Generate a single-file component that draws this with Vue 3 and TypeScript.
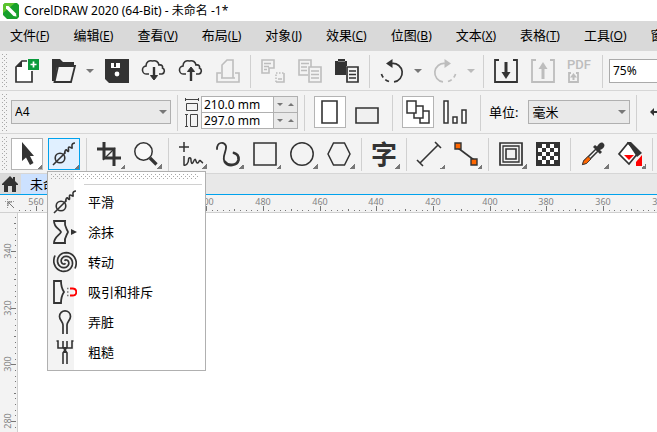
<script setup lang="ts">
import { computed, onBeforeUnmount, onMounted, ref } from 'vue'

interface Item {
  kind: 'tool' | 'caret' | 'sep'
  icon?: string
  label?: string
  off?: boolean
  corner?: boolean
  state?: 'framed' | 'active'
}

const D = '#333'
const G = '#bdbdbd'
const BG = '#f3f3f3'

/* One arm of the twirl icon: a spiral of one and a half turns. */
function spiral(phase: number) {
  const pts: string[] = []
  for (let t = 0.6; t <= Math.PI * 3; t += 0.2) {
    const r = 0.6 + t * 1.2
    pts.push(`${(12 + r * Math.cos(t + phase)).toFixed(1)} ${(12 + r * Math.sin(t + phase)).toFixed(1)}`)
  }
  return `<path d="M${pts.join('L')}" fill="none" stroke="${D}" stroke-width="1.700" stroke-linejoin="round"/>`
}

const cloud = `<path d="M7 15H5A4 4 0 0 1 4 7C4 3 7 1 10.500 2C14 1 16.500 3 17 6C20 5.500 21 7 20.500 9A3.200 3.200 0 0 1 20 15H17" fill="none" stroke="${D}" stroke-width="1.600"/>`
const smooth = `<g fill="none" stroke="${D}" stroke-width="1.600"><path d="M1 23L13.500 10.500"/><circle cx="8" cy="16" r="4.800"/><path d="M12.500 11.500C13 8 14 7 15 8.500S17 10 16.500 7.500S17 4.500 18.500 5.500S20.500 7 20 4.500S21 1 23 1"/></g>`

const icons: Record<string, string> = {
  create: `<path d="M12 2H7L1 8V23H17V12" fill="#fff" stroke="${D}" stroke-width="1.700"/><path d="M1 8L7 2V8Z" fill="${D}"/><rect x="13" y="0" width="11" height="11" fill="#0a9a3c"/><path d="M18.500 2.500V8.500M15.500 5.500H21.500" stroke="#fff" stroke-width="1.700"/>`,
  open: `<path d="M0 0H8L11 3H22V8H5L3 22H0Z" fill="${D}"/><path d="M6 7H23L19 23H2.500Z" fill="${BG}" stroke="${D}" stroke-width="1.800"/>`,
  save: `<path d="M0 0H24V24H4L0 20Z" fill="${D}"/><path d="M6 4H15V9H6Z" fill="#fff"/><path d="M9 4H11V8H9Z" fill="${D}"/><circle cx="12" cy="15" r="2.400" fill="#fff"/>`,
  down: cloud + `<path d="M12 8V20" stroke="${D}" stroke-width="2.400"/><path d="M8.500 16.500L12 21L15.500 16.500Z" fill="${D}" stroke="${D}"/>`,
  up: cloud + `<path d="M12 10V22" stroke="${D}" stroke-width="2.400"/><path d="M8.500 12.500L12 8L15.500 12.500Z" fill="${D}" stroke="${D}"/>`,
  print: `<g fill="none" stroke="${G}" stroke-width="1.600"><path d="M5 14H1V23H23V14H19M6 19V6L11 1H17V19ZM5 19H19"/></g>`,
  cut: `<g fill="none" stroke="${G}" stroke-width="1.600"><path d="M1 1H13V9H8V14H1ZM3 4.500H10M3 7.500H8M3 10.500H6"/><path d="M15 23H23V14M17 20H21"/><path d="M15 23V14H23" stroke-dasharray="1.500 1.500"/></g>`,
  copy: `<g fill="none" stroke="${G}" stroke-width="1.600"><path d="M10 16H1V1H13V8M3 4.500H11M3 8H9M3 11.500H9"/><path d="M11 8H23V23H11ZM13 12H21M13 15.500H21M13 19H21"/></g>`,
  paste: `<path d="M0 2H3V0H10V2H12V7H11V16H0Z" fill="${D}"/><path d="M3 2.500H10" stroke="#888"/><path d="M12 8H23V23H12Z" fill="${BG}" stroke="${D}" stroke-width="1.700"/><path d="M14 12H21M14 15.500H21M14 19H21" stroke="${D}" stroke-width="1.500"/>`,
  undo: `<path d="M6 4.500L12.500 0V9Z" fill="${D}"/><path d="M12 4.500A9.200 9.200 0 0 1 14 22.800" fill="none" stroke="${D}" stroke-width="1.700"/><path d="M9 22.500Q2 20 1 13" fill="none" stroke="${D}" stroke-width="1.700" stroke-dasharray="4 3"/>`,
  redo: `<path d="M18 4.500L11.500 0V9Z" fill="${G}"/><path d="M12 4.500A9.200 9.200 0 0 0 10 22.800" fill="none" stroke="${G}" stroke-width="1.700"/><path d="M15 22.500Q22 20 23 13" fill="none" stroke="${G}" stroke-width="1.700" stroke-dasharray="4 3"/>`,
  importer: `<path d="M5 1H1V23H23V1H19" fill="none" stroke="${D}" stroke-width="1.800"/><path d="M12 3V15" stroke="${D}" stroke-width="3"/><path d="M7.500 13H16.500L12 20Z" fill="${D}"/>`,
  exporter: `<path d="M5 1H1V23H23V1H19" fill="none" stroke="${G}" stroke-width="1.800"/><path d="M12 8V20" stroke="${G}" stroke-width="3"/><path d="M7.500 10H16.500L12 3Z" fill="${G}"/>`,
  pdf: `<text x="-1" y="10" font-size="13" font-weight="500" fill="${G}" font-family="Roboto, sans-serif">PDF</text><path d="M3 14H1V23H10V14H8" fill="none" stroke="${G}" stroke-width="1.800"/><path d="M5.500 16V21" stroke="${G}" stroke-width="2"/><path d="M2 18.500H9L5.500 14Z" fill="${G}"/>`,
  pick: `<path d="M7 0V19L11 15.500L15 23L18.500 21L15 14H19Z" fill="${D}"/>`,
  smooth,
  crop: `<g fill="none" stroke="${D}" stroke-width="3"><path d="M7 0V16H24M0 7H17V24"/></g><path d="M6 18L18 6" stroke="${D}" stroke-width="1.200"/>`,
  zoom: `<circle cx="9.500" cy="9.500" r="8.700" fill="#f8f8f8" stroke="${D}" stroke-width="1.500"/><path d="M16 16L22.500 22.500" stroke="${D}" stroke-width="3.200"/>`,
  freehand: `<g fill="none" stroke="${D}" stroke-width="1.500"><path d="M5 0V10M0 5H10"/><path d="M5 14V23C7 24 9.500 21 9.500 18S12 15 12 18S13 23 14.500 19.500S16.500 17 17 19S19 22 20 19.500S22 20 24 21"/></g>`,
  curve: `<g fill="none" stroke="${D}" stroke-linecap="round"><path d="M1 7C1 0 8 -1 10 4C11 9 5 16 9 20" stroke-width="1.800"/><path d="M9 20C12 24.500 21 24 22.500 18C23 14 20.500 11.500 18 11" stroke-width="2.800"/></g>`,
  rect: `<path d="M1 1H23V23H1Z" fill="none" stroke="${D}" stroke-width="1.600"/>`,
  ellipse: `<circle cx="12" cy="12" r="11.200" fill="none" stroke="${D}" stroke-width="1.500"/>`,
  polygon: `<path d="M6.500 1H17.500L23 12L17.500 23H6.500L1 12Z" fill="none" stroke="${D}" stroke-width="1.500"/>`,
  text: `<text x="-1" y="22" font-size="26" font-weight="700" fill="${D}" font-family="'Noto Sans CJK SC', sans-serif">字</text>`,
  line: `<path d="M3 21L21 3M0 18L6 24M18 0L24 6" fill="none" stroke="${D}" stroke-width="1.600"/>`,
  connector: `<path d="M4 6L20 18" stroke="${D}" stroke-width="1.600"/><path d="M1 1H7V7H1ZM17 17H23V23H17Z" fill="#f60" stroke="${D}" stroke-width="1.400"/>`,
  contour: `<g fill="none" stroke="${D}"><path d="M1 1H23V23H1Z" stroke-width="1.700"/><path d="M4 4H20V20H4Z" stroke-width="1.300"/><path d="M7 7H17V17H7Z" stroke-width="1.600"/></g>`,
  checker: `<path d="M0 0H24V24H0Z" fill="${D}"/><path d="${[0, 1, 2, 3, 4].map(r => (r % 2 ? [0, 2, 4] : [1, 3]).map(c => `M${2 + c * 4} ${2 + r * 4}h4v4h-4z`).join('')).join('')}" fill="#fff"/>`,
  dropper: `<path d="M2 22L3 19L15 7L17 9L5 21Z" fill="#fff" stroke="${D}" stroke-width="1.500"/><path d="M1.500 22.500L2.500 19L7 14.500L10 17L5.500 21.500Z" fill="#f60" stroke="${D}" stroke-width=".8"/><path d="M12 5L14 3L16 4.500C19 -1 22 0 23 2C24.500 4 22 7 19 8L21 10L19 12Z" fill="${D}"/>`,
  fill: `<path d="M10 1L20 11L11 22L1 12Z" fill="#fff" stroke="${D}" stroke-width="1.700"/><path d="M9 0H13L24 11L19 15Z" fill="${D}"/><path d="M6 13H16L11 18Z" fill="#f00"/><path d="M24 13V24H18V20Z" fill="#f00"/>`,
  smear: `<path d="M1 1H12C11 7 14 9 15 12C14 15 11 17 12 23H1C1 17 7 15 8 12C7 9 1 8 1 1Z" fill="none" stroke="${D}" stroke-width="1.800"/><path d="M18 9L24 12L18 15Z" fill="${D}"/>`,
  twirl: spiral(0.6) + spiral(Math.PI + 0.6),
  attract: `<path d="M1 1H8C8 5 9 9 11 12C9 15 8 19 8 23H1Z" fill="none" stroke="${D}" stroke-width="1.800"/><path d="M14 8.500H15.500M14 15.500H15.500M14 12H15.500" stroke="#777" stroke-width="1.300"/><path d="M17 8.500H19.500C24.500 8.500 24.500 15.500 19.500 15.500H17" fill="none" stroke="#f00" stroke-width="1.800"/>`,
  smudge: `<path d="M10 24V15C10 12 6.500 10 6.500 6.500C6.500 -1 17.500 -1 17.500 6.500C17.500 10 14 12 14 15V24" fill="none" stroke="${D}" stroke-width="1.700"/>`,
  rough: `<g fill="none" stroke="${D}" stroke-width="1.600"><path d="M3.500 1H5V8H10V1M14 1V8H19V1H20.500M10 24V13M14 24V13"/></g><path d="M9 7H15L13 10L15 13H9L11 10Z" fill="${D}"/>`,
}

const tool = (icon: string, label: string, extra: Partial<Item> = {}): Item => ({ kind: 'tool', icon, label, ...extra })
const caret = (label: string, off = false): Item => ({ kind: 'caret', label, off })
const sep: Item = { kind: 'sep' }
const C = { corner: true }

const standard: Item[] = [
  tool('create', '新建'), tool('open', '打开'), caret('最近打开'), tool('save', '保存'),
  tool('down', '从云端打开'), tool('up', '保存到云端'), tool('print', '打印', { off: true }), sep,
  tool('cut', '剪切', { off: true }), tool('copy', '复制', { off: true }), tool('paste', '粘贴'), sep,
  tool('undo', '撤消'), caret('撤消列表'), tool('redo', '重做', { off: true }), caret('重做列表', true), sep,
  tool('importer', '导入'), tool('exporter', '导出', { off: true }), tool('pdf', '发布为 PDF', { off: true }), sep,
]

const toolbox: Item[] = [
  tool('pick', '选择', { corner: true, state: 'framed' }), tool('smooth', '平滑', { corner: true, state: 'active' }), sep,
  tool('crop', '裁剪', C), tool('zoom', '缩放', C), sep,
  tool('freehand', '手绘', C), tool('curve', '艺术笔', C), tool('rect', '矩形', C), tool('ellipse', '椭圆形', C), tool('polygon', '多边形', C), sep,
  tool('text', '文本', C), sep,
  tool('line', '平行度量', C), tool('connector', '连接器', C), sep,
  tool('contour', '轮廓图', C), tool('checker', '透明度'), sep,
  tool('dropper', '颜色滴管', C), tool('fill', '交互式填充', C), sep,
]

const menus: [string, string][] = [
  ['文件', 'F'], ['编辑', 'E'], ['查看', 'V'], ['布局', 'L'], ['对象', 'J'], ['效果', 'C'],
  ['位图', 'B'], ['文本', 'X'], ['表格', 'T'], ['工具', 'O'], ['窗口', 'W'],
]

const flyout: [string, string][] = [
  ['smooth', '平滑'], ['smear', '涂抹'], ['twirl', '转动'], ['attract', '吸引和排斥'], ['smudge', '弄脏'], ['rough', '粗糙'],
]

const zoomLevel = ref('75%')
const paper = ref('A4')
const unit = ref('毫米')
const sizes = ref([
  { label: '宽度', value: '210.0 mm' },
  { label: '高度', value: '297.0 mm' },
])

const view = ref({ w: window.innerWidth, h: window.innerHeight })
const measure = () => { view.value = { w: window.innerWidth, h: window.innerHeight } }
onMounted(() => window.addEventListener('resize', measure))
onBeforeUnmount(() => window.removeEventListener('resize', measure))

/* Ruler marks: one every 2 units, a taller one every 10, a labelled one every 20. */
const STEP = 5.67
const LABEL_REACH = 8
function marks(origin: number, first: number, length: number) {
  const out: { pos: number; len: number; label: string }[] = []
  for (let i = -Math.floor(origin / STEP); origin + i * STEP < length + LABEL_REACH; i++) {
    const major = i % 10 === 0
    out.push({
      pos: Math.round(origin + i * STEP),
      len: major ? 5 : i % 5 === 0 ? 2 : 1,
      label: major ? String(Math.abs(first - i * 2)) : '',
    })
  }
  return out
}
const across = computed(() => marks(19, 560, view.value.w - 17))
const along = computed(() => marks(38, 340, view.value.h - 213))
</script>

<template>
  <div class="app">
    <header class="title">
      <svg class="logo" viewBox="0 0 16 16" aria-hidden="true">
        <path d="M2 0H14L16 2V14L14 16H4L0 12V2Z" fill="#17a02b" />
        <path d="M0 10V2L2 0H12Z" fill="#5cc32e" />
        <path d="M3 3L5.500 3L13 10.500L13.500 13.500L10.500 13L3 5.500Z" fill="#fff" />
      </svg>
      <span>CorelDRAW 2020 (64-Bit) - 未命名 -1*</span>
    </header>

    <nav class="menubar">
      <button v-for="[name, key] in menus" :key="key" type="button">{{ name }}<small>(<u>{{ key }}</u>)</small></button>
    </nav>

    <div class="bar standard" role="toolbar" aria-label="标准">
      <i class="grip"></i>
      <template v-for="(it, i) in standard" :key="i">
        <i v-if="it.kind === 'sep'" class="sep"></i>
        <button v-else-if="it.kind === 'caret'" class="caret" :class="{ off: it.off }" type="button" :aria-label="it.label"></button>
        <button v-else class="tool" type="button" :aria-label="it.label" :disabled="it.off">
          <svg viewBox="0 0 24 24" v-html="icons[it.icon!]"></svg>
        </button>
      </template>
      <input v-model="zoomLevel" class="zoom" type="text" aria-label="缩放级别" />
    </div>

    <div class="bar property" role="toolbar" aria-label="属性栏">
      <i class="grip"></i>
      <div class="pick paper">
        <select v-model="paper" aria-label="页面大小"><option>A4</option><option>A3</option></select>
      </div>
      <i class="sep"></i>
      <div class="dims">
        <svg viewBox="0 0 14 32" aria-hidden="true">
          <g fill="none" stroke="#444">
            <path d="M1 3.500H13M.5 2V5M13.500 2V5M1.500 7.500H12.500V14.500H1.500Z" />
            <path d="M1.500 19V30M0 18.500H3M0 30.500H3M5.500 18.500H12.500V30.500H5.500Z" />
          </g>
        </svg>
        <div class="sizes">
          <div v-for="s in sizes" :key="s.label" class="size">
            <input v-model="s.value" type="text" :aria-label="s.label" />
            <button type="button" class="dn" :aria-label="'减小' + s.label"></button>
            <button type="button" class="up" :aria-label="'增大' + s.label"></button>
          </div>
        </div>
      </div>
      <i class="sep"></i>
      <div class="pair">
        <button class="choice on" type="button" aria-label="纵向">
          <svg viewBox="0 0 24 24"><path d="M4 1H19V23H4Z" fill="#fff" stroke="#333" stroke-width="1.600" /></svg>
        </button>
        <button class="choice" type="button" aria-label="横向">
          <svg viewBox="0 0 24 24"><path d="M1 8H23V23H1Z" fill="#f0f0f0" stroke="#333" stroke-width="1.600" /></svg>
        </button>
      </div>
      <i class="sep"></i>
      <div class="pair">
        <button class="choice on" type="button" aria-label="所有页面">
          <svg viewBox="0 0 24 24"><g fill="#fff" stroke="#333" stroke-width="1.500"><path d="M14 11H23V23H14Z" /><path d="M8 6H17V18H8Z" /><path d="M1 1H10V13H1Z" /></g></svg>
        </button>
        <button class="choice" type="button" aria-label="当前页">
          <svg viewBox="0 0 24 24"><path d="M1 1H5V23H1ZM10 17H14V23H10ZM19 10H23V23H19Z" fill="#fff" stroke="#333" stroke-width="1.500" /></svg>
        </button>
      </div>
      <i class="sep"></i>
      <label class="unit" for="unit">单位:</label>
      <div class="pick units">
        <select id="unit" v-model="unit"><option>毫米</option><option>厘米</option></select>
      </div>
      <i class="sep"></i>
      <button class="nudge" type="button" aria-label="微调距离">
        <svg viewBox="0 0 12 12"><path d="M0 6L4 2V10ZM12 6L8 2V10ZM3 5H9V7H3Z" fill="#333" /></svg>
      </button>
    </div>

    <div class="bar toolbox" role="toolbar" aria-label="工具箱">
      <i class="grip"></i>
      <template v-for="(it, i) in toolbox" :key="i">
        <i v-if="it.kind === 'sep'" class="sep"></i>
        <button v-else class="tool" :class="[it.state, { corner: it.corner }]" type="button" :aria-label="it.label">
          <svg viewBox="0 0 24 24" v-html="icons[it.icon!]"></svg>
        </button>
      </template>
      <div class="flyout" role="menu">
        <i class="dots"></i>
        <i class="rule"></i>
        <button v-for="[icon, name] in flyout" :key="icon" type="button" role="menuitem">
          <svg viewBox="0 0 24 24" v-html="icons[icon]"></svg>
          <span>{{ name }}</span>
        </button>
      </div>
    </div>

    <div class="tabs">
      <button class="home" type="button" aria-label="欢迎屏幕">
        <svg viewBox="0 0 16 16"><path d="M8 0L16 8V9H14V16H10V10H6V16H2V9H0V8ZM11 1H13V5L11 3Z" fill="#333" /></svg>
      </button>
      <button class="doc" type="button">未命名 -1*</button>
    </div>

    <div class="ruler-row">
      <button class="origin" type="button" aria-label="标尺原点">
        <svg viewBox="0 0 10 10"><path d="M2.500 0V10M0 2.500H10" stroke="#999" stroke-dasharray="1 1" /><path d="M3 3L9 9M3 7V3H7" fill="none" stroke="#777" /></svg>
      </button>
      <svg class="h-ruler">
        <template v-for="m in across" :key="m.pos">
          <rect :x="m.pos" :y="16 - m.len" width="1" :height="m.len" />
          <text v-if="m.label" :x="m.pos" y="10">{{ m.label }}</text>
        </template>
      </svg>
    </div>

    <div class="work">
      <svg class="v-ruler">
        <template v-for="m in along" :key="m.pos">
          <rect :x="16 - m.len" :y="m.pos" :width="m.len" height="1" />
          <text v-if="m.label" :transform="`translate(11 ${m.pos}) rotate(-90)`">{{ m.label }}</text>
        </template>
      </svg>
      <main class="canvas"></main>
    </div>
  </div>
</template>

<style>
body {
  background: #fff;
}
</style>

<style scoped>
.app {
  display: flex;
  flex-direction: column;
  height: 100vh;
  overflow: hidden;
  color: #000;
  font: 13px/20px "Noto Sans", "Noto Sans CJK SC", sans-serif;
}
.app * {
  box-sizing: border-box;
}
button,
input,
select {
  margin: 0;
  padding: 0;
  border: 0;
  background: none;
  color: inherit;
  font: inherit;
}
svg {
  display: block;
  flex: none;
}
.title {
  display: flex;
  flex: none;
  align-items: center;
  gap: 5px;
  height: 21px;
  padding-left: 3px;
  font-size: 12px;
  white-space: nowrap;
}
.logo {
  width: 16px;
  height: 16px;
}
.menubar {
  display: flex;
  flex: none;
  gap: 24px;
  height: 30px;
  padding: 0 0 2px 10px;
  background: #d9d9d9;
}
.menubar button {
  flex: none;
  white-space: nowrap;
}
.menubar small {
  font-size: 12px;
}
.bar {
  position: relative;
  display: flex;
  flex: none;
  align-items: center;
  background: #f3f3f3;
  border-bottom: 1px solid #d6d6d6;
}
.bar > * {
  flex: none;
}
.standard,
.toolbox {
  height: 40px;
}
.property {
  height: 43px;
}
.grip {
  align-self: stretch;
  width: 6px;
  margin: 3px 0 2px 2px;
}
.grip,
.dots {
  background:
    conic-gradient(at 1px 1px, transparent 75%, #a8a8a8 0) 0 0 / 4px 4px,
    conic-gradient(at 1px 1px, transparent 75%, #a8a8a8 0) 2px 2px / 4px 4px;
}
.sep {
  align-self: stretch;
  width: 1px;
  margin: 4px 3px 2px 4px;
  background: #d0d0d0;
}
.tool {
  position: relative;
  display: flex;
  align-items: center;
  justify-content: center;
  width: 37px;
  height: 32px;
  padding-left: 1px;
}
.tool svg {
  width: 24px;
  height: 24px;
  overflow: visible;
}
.framed,
.active {
  width: 32px;
  margin: 0 2px 0 3px;
  padding: 0;
  border: 1px solid #b4b4b4;
  background: #fff;
}
.active {
  border-color: #00a2ed;
  background: #e0f0ff;
}
.corner::after {
  content: "";
  position: absolute;
  right: 2px;
  bottom: 1px;
  width: 5px;
  height: 5px;
  background: linear-gradient(135deg, transparent 50%, #777 50%);
}
.framed::after,
.active::after {
  right: 0;
  bottom: 0;
}
.caret {
  display: flex;
  justify-content: center;
  width: 16px;
}
.caret::before {
  content: "";
  border: 4px solid transparent;
  border-top-color: #777;
  border-bottom: 0;
}
.caret.off::before {
  border-top-color: #bbb;
}
.zoom {
  flex: 1 0 40px;
  min-width: 0;
  height: 24px;
  margin-left: 3px;
  padding-left: 3px;
  border: 1px solid #aaa;
  border-right: 0;
  background: #fff;
  font-size: 12px;
}
.pick {
  position: relative;
  height: 24px;
}
.pick select {
  width: 100%;
  height: 100%;
  padding-left: 3px;
  border: 1px solid #b0b0b0;
  background: #e9e9e9;
  appearance: none;
}
.pick::after {
  content: "";
  position: absolute;
  top: 10px;
  right: 4px;
  border: 4px solid transparent;
  border-top-color: #777;
  border-bottom: 0;
  pointer-events: none;
}
.paper {
  width: 160px;
  margin: 0 2px 0 3px;
}
.paper select {
  font-size: 12px;
}
.units {
  width: 102px;
  margin: 0 2px 0 10px;
}
.unit {
  padding-left: 5px;
}
.dims {
  display: flex;
  align-items: center;
  gap: 2px;
  padding: 0 2px 0 4px;
}
.dims > svg {
  width: 14px;
  height: 32px;
}
.sizes {
  width: 97px;
  border: 1px solid #b0b0b0;
  background: #fff;
}
.size {
  display: flex;
  height: 15px;
}
.size + .size {
  height: 16px;
  border-top: 1px solid #b0b0b0;
}
.size input {
  flex: 1;
  min-width: 0;
  padding-left: 2px;
  font-size: 12px;
  line-height: 15px;
}
.size button {
  display: flex;
  align-items: center;
  justify-content: center;
  width: 12px;
  background: #e9e9e9;
}
.size button.dn {
  border-left: 1px solid #b0b0b0;
}
.size button::before {
  content: "";
  border: 3px solid transparent;
}
.size .dn::before {
  border-top-color: #777;
  border-bottom: 0;
}
.size .up::before {
  border-bottom-color: #777;
  border-top: 0;
}
.pair {
  display: flex;
  gap: 5px;
  padding: 0 5px 0 6px;
}
.choice {
  display: flex;
  align-items: center;
  justify-content: center;
  width: 32px;
  height: 32px;
}
.choice.on {
  border: 1px solid #b4b4b4;
  background: #fff;
}
.choice svg {
  width: 24px;
  height: 24px;
}
.nudge {
  margin-left: 10px;
}
.nudge svg {
  width: 12px;
  height: 12px;
}
.flyout {
  position: absolute;
  z-index: 2;
  top: 37px;
  left: 47px;
  display: flex;
  flex-direction: column;
  width: 159px;
  padding-bottom: 3px;
  border: 1px solid #b0b0b0;
  background: linear-gradient(90deg, #f3f3f3 26px, #fff 26px);
}
.dots {
  height: 6px;
  margin: 2px 7px 4px 3px;
}
.rule {
  height: 1px;
  margin: 0 3px 2px 36px;
  background: #d0d0d0;
}
.flyout button {
  display: flex;
  align-items: center;
  gap: 11px;
  height: 30px;
  padding-left: 5px;
}
.flyout svg {
  width: 24px;
  height: 24px;
}
.tabs {
  display: flex;
  flex: none;
  height: 21px;
  background: #e8e8e8;
  border-bottom: 1px solid #00a2ed;
}
.home {
  display: flex;
  align-items: center;
  justify-content: center;
  width: 21px;
  padding-right: 2px;
  background: #dadada;
}
.home svg {
  width: 16px;
  height: 16px;
}
.doc {
  padding: 0 9px;
  background: #cce1ff;
  line-height: 18px;
}
.ruler-row {
  display: flex;
  flex: none;
  height: 18px;
  background: #f3f3f3;
  border-bottom: 1px solid #d0d0d0;
}
.origin {
  flex: none;
  width: 17px;
  padding: 3px 2px 3px 5px;
}
.origin svg {
  width: 10px;
  height: 10px;
}
.h-ruler {
  flex: 1;
  min-width: 0;
  height: 17px;
}
.work {
  display: flex;
  flex: 1;
  min-height: 0;
}
.v-ruler {
  width: 18px;
  height: 100%;
  background: #f3f3f3;
  border-right: 1px solid #d0d0d0;
}
.canvas {
  flex: 1;
  background: #fff;
}
.h-ruler rect,
.v-ruler rect {
  fill: #777;
}
.h-ruler text,
.v-ruler text {
  fill: #848484;
  font-size: 9px;
  text-anchor: middle;
}
</style>
